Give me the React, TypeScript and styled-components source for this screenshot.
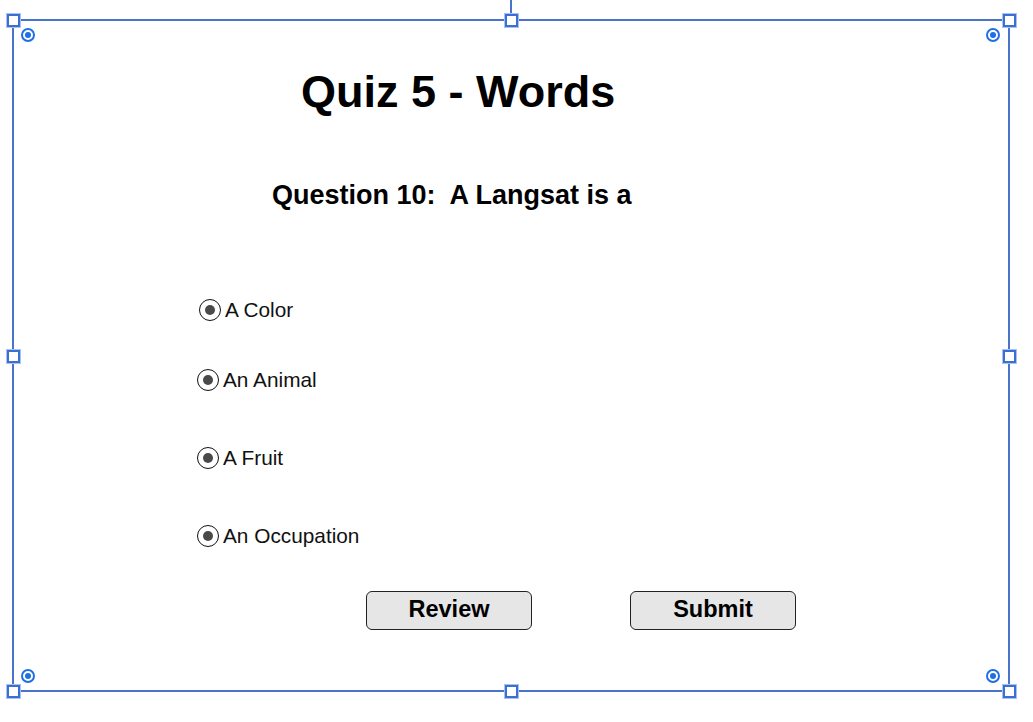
import styled, { createGlobalStyle } from "styled-components";

const GlobalStyle = createGlobalStyle`
  html, body {
    margin: 0;
    padding: 0;
    background: #ffffff;
  }
  body {
    font-family: "Liberation Sans", Arial, Helvetica, sans-serif;
    color: #000;
  }
`;

const Stage = styled.div`
  position: relative;
  width: 1033px;
  height: 722px;
  overflow: hidden;
  background: #ffffff;
`;

const Frame = styled.div`
  margin: 19px 0 0 12px;
  width: 998px;
  height: 673px;
  box-sizing: border-box;
  border: 2px solid #4a74cc;
  display: flex;
  flex-direction: column;
  padding-top: 46px;
`;

const Title = styled.h1`
  margin: 0 0 0 287px;
  font-size: 45px;
  line-height: 50px;
  font-weight: 700;
`;

const Question = styled.h2`
  margin: 62px 0 0 258px;
  font-size: 27px;
  line-height: 32px;
  font-weight: 700;
`;

const Options = styled.div`
  display: flex;
  flex-direction: column;
  margin-top: 87px;
`;

const Option = styled.label<{ $indent: number; $top: number }>`
  display: flex;
  align-items: center;
  gap: 4px;
  margin: ${(p) => p.$top}px 0 0 ${(p) => p.$indent}px;
  font-size: 20.8px;
  line-height: 24px;
  height: 24px;
  color: #111;
`;

const Radio = styled.span`
  width: 22px;
  height: 22px;
  box-sizing: border-box;
  border: 1.8px solid #111;
  border-radius: 50%;
  display: flex;
  align-items: center;
  justify-content: center;

  &::after {
    content: "";
    width: 10px;
    height: 10px;
    border-radius: 50%;
    background: #4a4a4a;
  }
`;

const ButtonRow = styled.div`
  display: flex;
  gap: 98px;
  margin: 43px 0 0 352px;
`;

const Button = styled.button`
  width: 166px;
  height: 39px;
  box-sizing: border-box;
  border: 1px solid #222;
  border-radius: 6px;
  background: #e6e6e6;
  font-family: "Liberation Sans", Arial, sans-serif;
  font-size: 23.5px;
  font-weight: 700;
  color: #000;
  padding: 0 0 2px;
`;

const Handle = styled.span<{ $x: number; $y: number }>`
  position: absolute;
  left: ${(p) => p.$x - 6}px;
  top: ${(p) => p.$y - 6}px;
  width: 13px;
  height: 13px;
  box-sizing: border-box;
  background: #fff;
  border: 2px solid #3b6fd6;
  box-shadow: 0 0 0 1px #a9c2ef;
`;

const Pin = styled.span<{ $x: number; $y: number }>`
  position: absolute;
  left: ${(p) => p.$x - 7}px;
  top: ${(p) => p.$y - 7}px;
  width: 14px;
  height: 14px;
  box-sizing: border-box;
  border: 2px solid #1f6fe5;
  border-radius: 50%;
  display: flex;
  align-items: center;
  justify-content: center;

  &::after {
    content: "";
    width: 6px;
    height: 6px;
    border-radius: 50%;
    background: #1f6fe5;
  }
`;

const Stem = styled.span`
  position: absolute;
  left: 510px;
  top: 0;
  width: 2px;
  height: 16px;
  background: #4a74cc;
`;

const options = [
  { label: "A Color", indent: 185, top: 0 },
  { label: "An Animal", indent: 183, top: 46 },
  { label: "A Fruit", indent: 183, top: 54 },
  { label: "An Occupation", indent: 183, top: 54 },
];

const handles = [
  [13, 20],
  [511, 20],
  [1009, 20],
  [13, 356],
  [1009, 356],
  [13, 691],
  [511, 691],
  [1009, 691],
];

const pins = [
  [28, 35],
  [993, 35],
  [28, 676],
  [993, 676],
];

const App = () => {
  return (
    <>
      <GlobalStyle />
      <Stage>
        <Frame>
          <Title>Quiz 5 - Words</Title>
          <Question>Question 10:&nbsp; A Langsat is a</Question>
          <Options>
            {options.map((o) => (
              <Option key={o.label} $indent={o.indent} $top={o.top}>
                <Radio />
                {o.label}
              </Option>
            ))}
          </Options>
          <ButtonRow>
            <Button>Review</Button>
            <Button>Submit</Button>
          </ButtonRow>
        </Frame>
        <Stem />
        {handles.map(([x, y]) => (
          <Handle key={`h${x}-${y}`} $x={x} $y={y} />
        ))}
        {pins.map(([x, y]) => (
          <Pin key={`p${x}-${y}`} $x={x} $y={y} />
        ))}
      </Stage>
    </>
  );
};

export default App;
